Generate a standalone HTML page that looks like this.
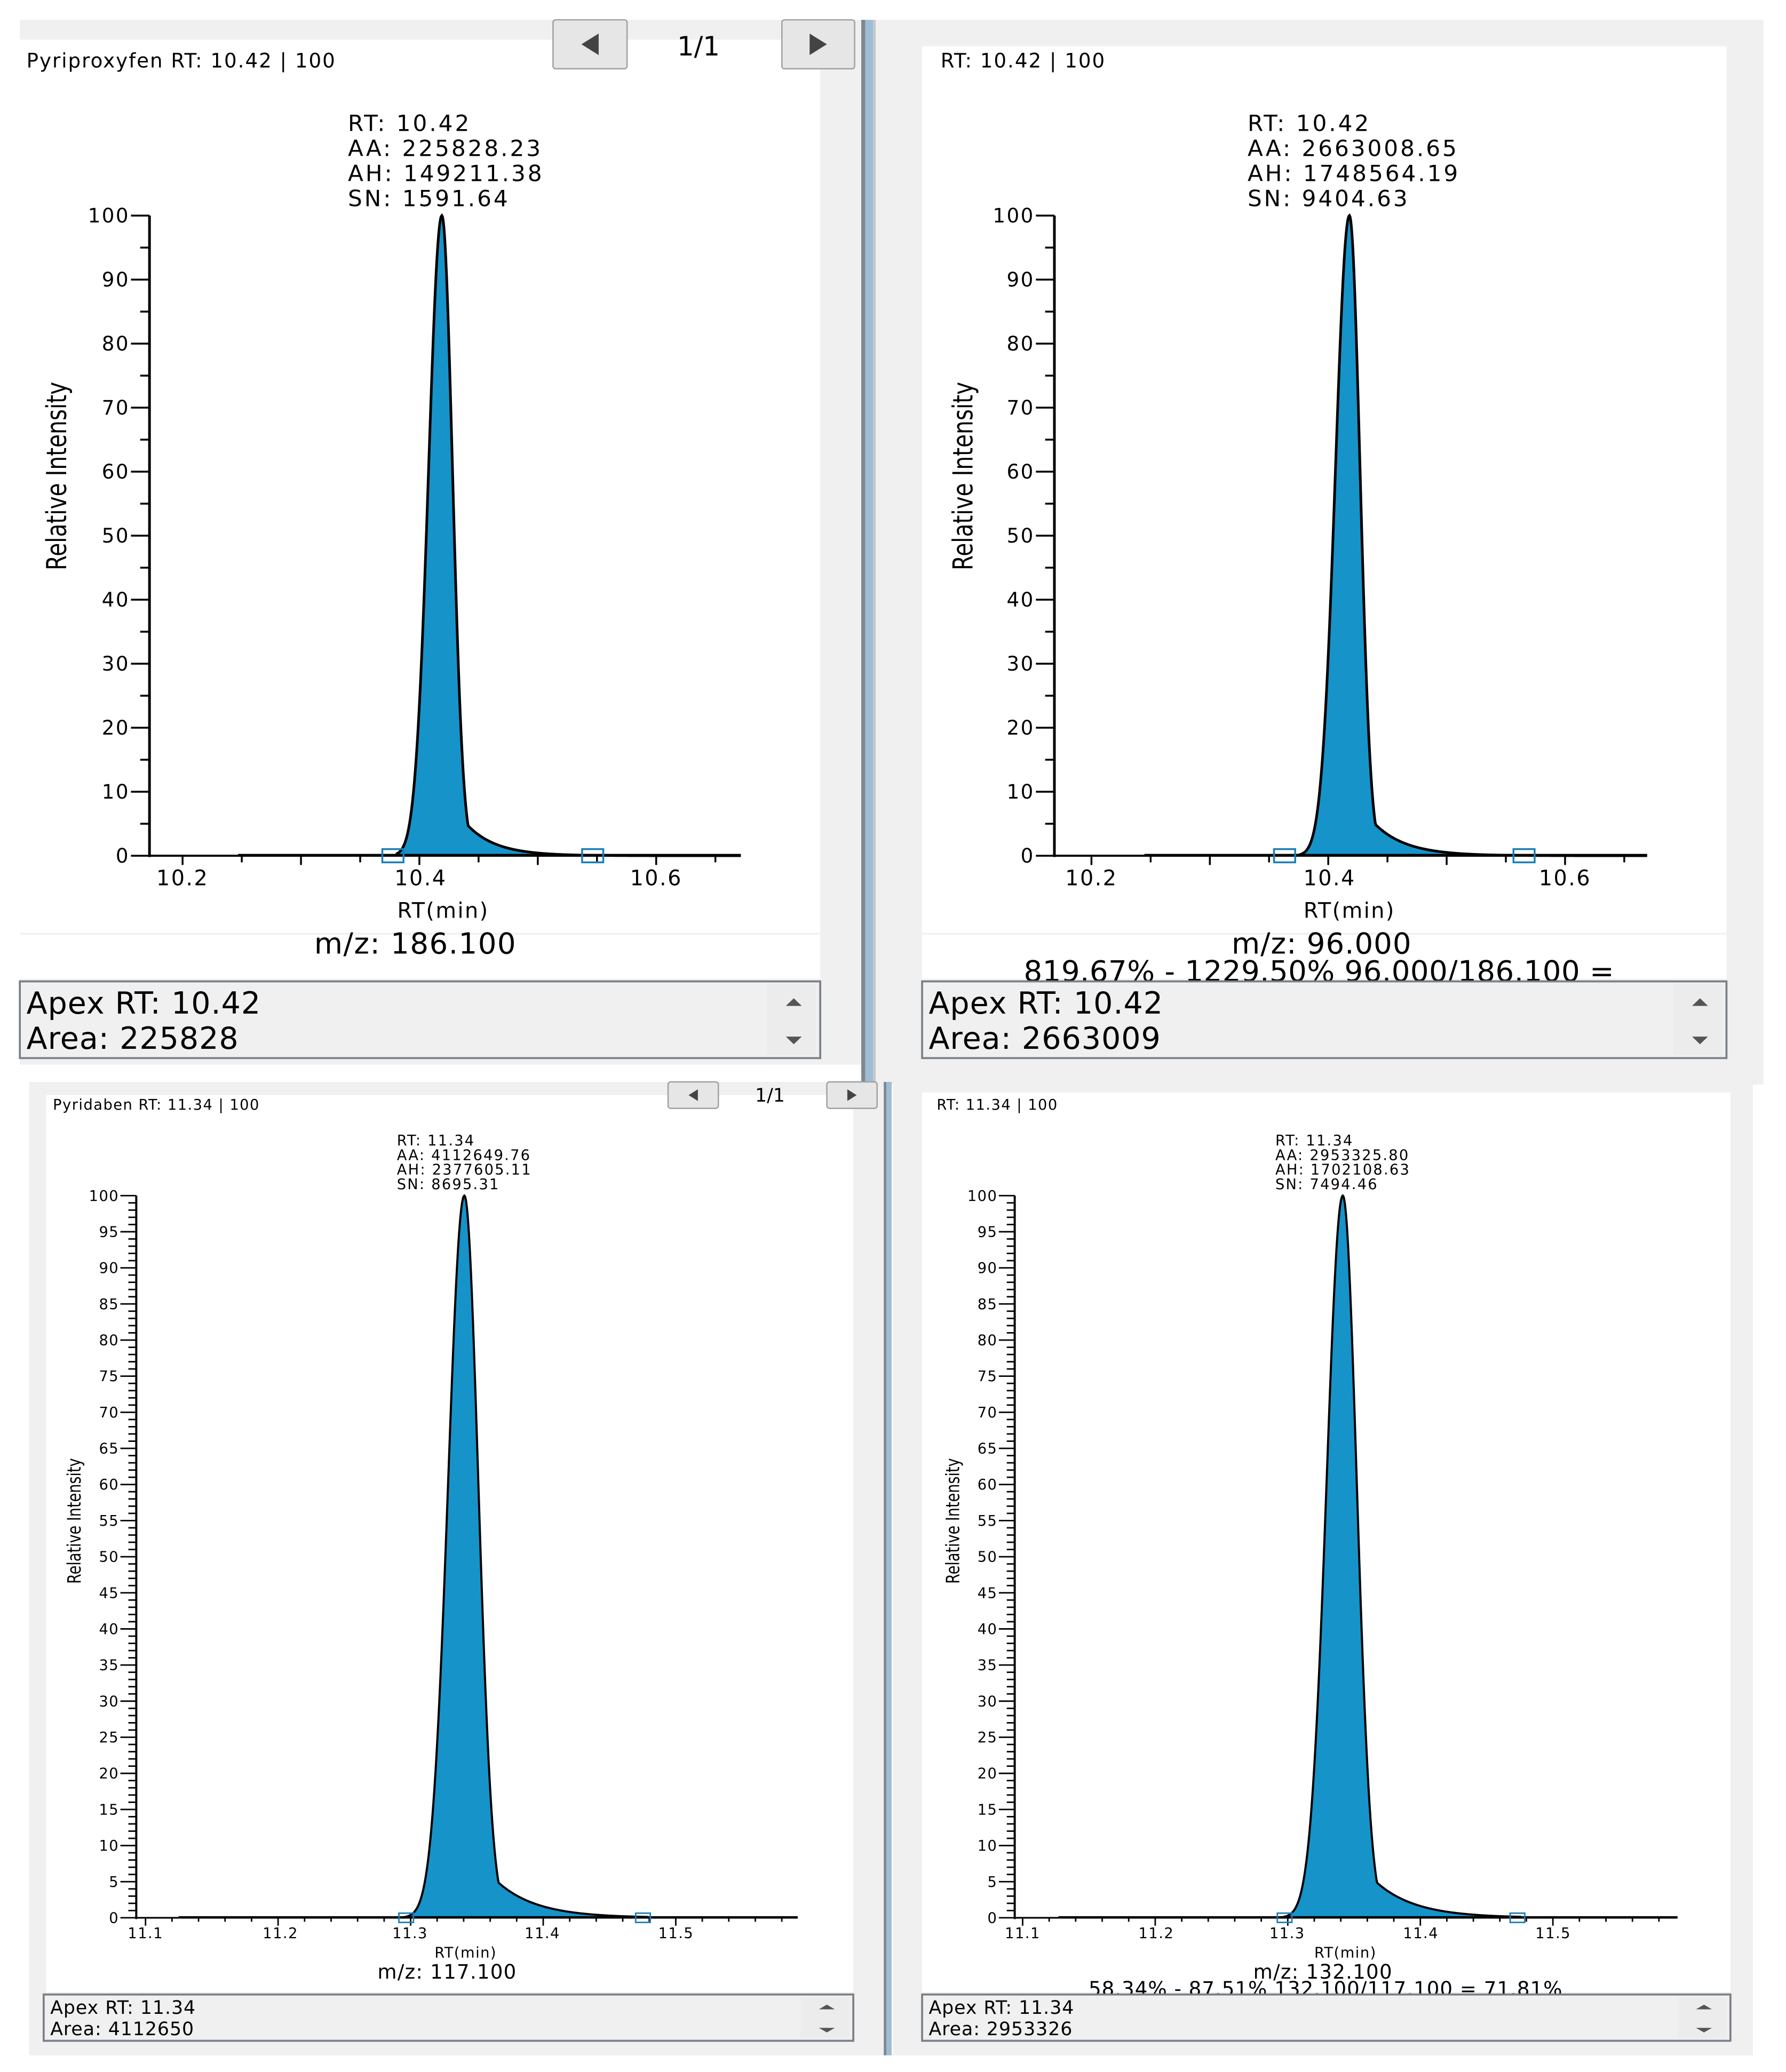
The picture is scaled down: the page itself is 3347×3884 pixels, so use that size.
<!DOCTYPE html>
<html><head><meta charset="utf-8">
<style>
html,body{margin:0;padding:0;background:#fff;}
svg{display:block;}
text{font-family:"DejaVu Sans","Liberation Sans",sans-serif;fill:#000;}
</style></head>
<body>
<svg id="s" width="3347" height="3884" viewBox="0 0 1350 1566.6" preserveAspectRatio="none" xmlns="http://www.w3.org/2000/svg">
<rect width="1350" height="1567" fill="#fff"/>
<rect x="15" y="15" width="640" height="790" fill="#f0f0f0"/>
<rect x="662" y="15" width="671" height="805" fill="#f0f0f0"/>
<rect x="15" y="30" width="605" height="710" fill="#fff"/>
<rect x="697" y="35" width="608" height="705" fill="#fff"/>
<line x1="15" y1="706" x2="620" y2="706" stroke="#eef2f6" stroke-width="1.5"/>
<line x1="697" y1="706" x2="1305" y2="706" stroke="#eef2f6" stroke-width="1.5"/>
<rect x="651" y="15" width="3" height="805" fill="#808890"/>
<rect x="654" y="15" width="6" height="805" fill="#9fbcd6"/>
<rect x="660" y="15" width="2" height="805" fill="#c8c8c8"/>
<rect x="22" y="818" width="650" height="736" fill="#f0f0f0"/>
<rect x="675" y="818" width="650" height="736" fill="#f0f0f0"/>
<rect x="35" y="828" width="610" height="678" fill="#fff"/>
<rect x="697" y="826" width="611" height="680" fill="#fff"/>
<rect x="668" y="818" width="2" height="736" fill="#808890"/>
<rect x="670" y="818" width="4" height="736" fill="#9fbcd6"/>
<g id="g"></g>
</svg>
<script>
var g=document.getElementById('g');var NS='http://www.w3.org/2000/svg';
function el(t,a,txt){var e=document.createElementNS(NS,t);for(var k in a)e.setAttribute(k,a[k]);if(txt!=null)e.textContent=txt;g.appendChild(e);return e;}
function T(x,y,s,txt,extra){var a={x:x,y:y,'font-size':s};for(var k in extra)a[k]=extra[k];return el('text',a,txt);}
function btn(x,y,w,h,dir){el('rect',{x:x,y:y,width:w,height:h,fill:'#e6e6e6',stroke:'#a0a0a0','stroke-width':1,rx:2});
 var cx=x+w/2,cy=y+h/2,s=h*0.22;
 var p=dir<0?[(cx+s*0.8)+','+(cy-s),(cx+s*0.8)+','+(cy+s),(cx-s*0.8)+','+cy]:[(cx-s*0.8)+','+(cy-s),(cx-s*0.8)+','+(cy+s),(cx+s*0.8)+','+cy];
 el('polygon',{points:p.join(' '),fill:'#444'});}
function infobox(x,y,w,h,l1,l2,fs){el('rect',{x:x,y:y,width:w,height:h,fill:'#f0f0f0',stroke:'#7a8088','stroke-width':1.5});
 el('rect',{x:x+w-40,y:y+2,width:37,height:h-4,fill:'#ececec'});
 T(x+5,y+h*0.42,fs,l1,{'letter-spacing':0.4});T(x+5,y+h*0.88,fs,l2,{'letter-spacing':0.4});
 var ax=x+w-20;el('polygon',{points:(ax-6)+','+(y+h*0.32)+' '+(ax+6)+','+(y+h*0.32)+' '+ax+','+(y+h*0.22),fill:'#555'});
 el('polygon',{points:(ax-6)+','+(y+h*0.72)+' '+(ax+6)+','+(y+h*0.72)+' '+ax+','+(y+h*0.82),fill:'#555'});}
function chart(o){
 var ax=o.ax,top=o.top,bot=o.bot,right=o.right;
 var sy=function(v){return bot-(bot-top)*v/100;};
 var x0=o.start,x1=o.end;
 var pv=function(x){var v;if(x<o.pk){v=100*Math.exp(-Math.pow((x-o.pk)/o.sl,2)/2);}else{v=100*Math.exp(-Math.pow((x-o.pk)/o.sr,2)/2);var tl=o.ta*Math.exp(-(x-o.tx)/o.tk);if(tl>v)v=tl;}return v;};
 var d='M'+x0+','+bot,d2='M'+x0+','+bot;for(var x=x0;x<=x1;x+=0.5){var q=' L'+x+','+sy(pv(x)).toFixed(2);d+=q;d2+=q;}d+=' L'+x1+','+bot+' Z';
 el('path',{d:d,fill:'#1693c9',stroke:'none'});
 el('path',{d:d2,fill:'none',stroke:'#000','stroke-width':o.lw});
 el('line',{x1:ax,y1:bot,x2:right,y2:bot,stroke:'#000','stroke-width':o.lw*0.8});
 el('line',{x1:o.bl,y1:bot-0.6,x2:right,y2:bot-0.6,stroke:'#000','stroke-width':o.lw*0.8});
 el('line',{x1:ax,y1:top,x2:ax,y2:bot+1,stroke:'#000','stroke-width':o.lw});
 for(var v=0;v<=100;v+=o.minor){var isM=(v%o.major==0);var y=sy(v);
  el('line',{x1:ax-(isM?o.tl:o.tl*0.5),y1:y,x2:ax,y2:y,stroke:'#000','stroke-width':o.lw*0.7});
  if(isM)T(ax-o.tl-1,y+o.yfs*0.35,o.yfs,String(v),{'text-anchor':'end','letter-spacing':o.yls||0});}
 for(var i=0;i<o.xt.length;i++){var t=o.xt[i];el('line',{x1:t[0],y1:bot,x2:t[0],y2:bot+t[1],stroke:'#000','stroke-width':o.lw*0.7});}
 for(var i=0;i<o.xl.length;i++){T(o.xl[i][0],bot+o.xfs*1.4,o.xfs,o.xl[i][1],{'text-anchor':'middle','letter-spacing':o.yls||0});}
 for(var i=0;i<o.mk.length;i++){el('rect',{x:o.mk[i]-o.mw/2,y:bot-o.mh/2,width:o.mw,height:o.mh,fill:'none',stroke:'#1a7fb8','stroke-width':o.lw*0.7});}
 var a=o.ann;for(var i=0;i<4;i++)T(a.x,a.y+i*a.dy,a.fs,a.t[i],{'letter-spacing':a.ls});
 T(0,0,o.ylf,'Relative Intensity',{transform:'translate('+o.ylx+','+o.yly+') rotate(-90) scale(0.78,1)','text-anchor':'middle','font-family':'Liberation Sans, sans-serif'});
 T(o.rtx,o.rty,o.rtf,'RT(min)',{'text-anchor':'middle','letter-spacing':o.yls||0});
}
T(20,51,15,'Pyriproxyfen  RT: 10.42 | 100',{'letter-spacing':0.8});
btn(418,15,56,37,-1);T(528,42,20,'1/1',{'text-anchor':'middle'});btn(591,15,55,37,1);
var xtTop=function(off){var r=[];for(var t=10.2;t<=10.66;t+=0.05){var x=off+138+(t-10.2)*895;r.push([x,Math.abs((t*10)-Math.round(t*10))<0.01?7:5]);}return r;};
chart({ax:113,top:163,bot:647,right:560,start:300,end:560,bl:180,pk:334,sl:10,sr:8,ta:7,tx:345,tk:22,lw:2,
 minor:5,major:10,tl:14,yfs:15,xfs:16,yls:1,xt:xtTop(0),xl:[[138,'10.2'],[318,'10.4'],[496,'10.6']],
 mk:[297,448],mw:16,mh:10,ann:{x:263,y:99,dy:19,fs:17,ls:1.6,t:['RT: 10.42','AA: 225828.23','AH: 149211.38','SN: 1591.64']},
 ylf:21,ylx:50,yly:360,rtx:335,rty:694,rtf:16});
T(314,721,22,'m/z: 186.100',{'text-anchor':'middle','letter-spacing':0.6});
infobox(15,742,605,58,'Apex RT: 10.42','Area: 225828',23);
T(711,51,15,'RT: 10.42 | 100',{'letter-spacing':0.8});
chart({ax:797,top:163,bot:647,right:1245,start:980,end:1245,bl:865,pk:1020,sl:10.5,sr:8,ta:7,tx:1031,tk:24,lw:2,
 minor:5,major:10,tl:14,yfs:15,xfs:16,yls:1,xt:xtTop(687),xl:[[825,'10.2'],[1005,'10.4'],[1183,'10.6']],
 mk:[971,1152],mw:16,mh:10,ann:{x:943,y:99,dy:19,fs:17,ls:1.6,t:['RT: 10.42','AA: 2663008.65','AH: 1748564.19','SN: 9404.63']},
 ylf:21,ylx:735,yly:360,rtx:1020,rty:694,rtf:16});
T(999,721,22,'m/z: 96.000',{'text-anchor':'middle','letter-spacing':0.4});
T(997,742,22,'819.67% - 1229.50% 96.000/186.100 =',{'text-anchor':'middle','letter-spacing':0.2});
infobox(697,742,608,58,'Apex RT: 10.42','Area: 2663009',23);
var xtBot=function(off){var r=[];for(var i=0;i<=24;i++){var t=11.1+i*0.02;var x=off+110+(t-11.1)*1002;r.push([x,i%5==0?6:3]);}return r;};
T(40,839,11,'Pyridaben  RT: 11.34 | 100',{'letter-spacing':0.6});
btn(505,818,38,20,-1);T(582,833,14,'1/1',{'text-anchor':'middle'});btn(625,818,38,20,1);
chart({ax:103,top:904,bot:1450,right:603,start:300,end:490,bl:135,pk:351,sl:12.2,sr:10.5,ta:5,tx:376,tk:30,lw:1.6,
 minor:1,major:5,tl:12,yfs:11,xfs:11,yls:0.6,xt:xtBot(0),xl:[[110,'11.1'],[212,'11.2'],[310,'11.3'],[410,'11.4'],[511,'11.5']],
 mk:[307,486],mw:11,mh:7,ann:{x:300,y:866,dy:11,fs:11,ls:0.9,t:['RT: 11.34','AA: 4112649.76','AH: 2377605.11','SN: 8695.31']},
 ylf:14,ylx:61,yly:1150,rtx:352,rty:1480,rtf:11});
T(338,1496,15,'m/z: 117.100',{'text-anchor':'middle','letter-spacing':0.5});
infobox(33,1508,612,35,'Apex RT: 11.34','Area: 4112650',14);
T(708,839,11,'RT: 11.34 | 100',{'letter-spacing':0.6});
chart({ax:767,top:904,bot:1450,right:1268,start:965,end:1150,bl:800,pk:1015,sl:12.2,sr:10.5,ta:5,tx:1040,tk:30,lw:1.6,
 minor:1,major:5,tl:12,yfs:11,xfs:11,yls:0.6,xt:xtBot(663),xl:[[773,'11.1'],[874,'11.2'],[973,'11.3'],[1074,'11.4'],[1174,'11.5']],
 mk:[971,1147],mw:11,mh:7,ann:{x:964,y:866,dy:11,fs:11,ls:0.9,t:['RT: 11.34','AA: 2953325.80','AH: 1702108.63','SN: 7494.46']},
 ylf:14,ylx:725,yly:1150,rtx:1017,rty:1480,rtf:11});
T(1000,1496,15,'m/z: 132.100',{'text-anchor':'middle','letter-spacing':0.5});
T(1002,1509,15,'58.34% - 87.51% 132.100/117.100 = 71.81%',{'text-anchor':'middle','letter-spacing':0.4});
infobox(697,1508,611,35,'Apex RT: 11.34','Area: 2953326',14);
</script>
</body></html>
